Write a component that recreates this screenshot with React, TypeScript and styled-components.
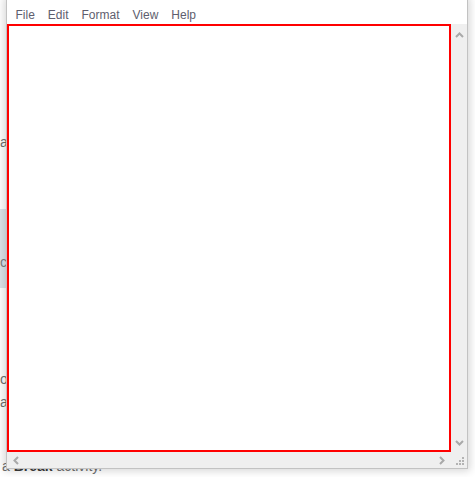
import React from "react";
import styled, { createGlobalStyle } from "styled-components";

const Global = createGlobalStyle`
  html, body { margin: 0; padding: 0; background: #ffffff; overflow: hidden; }
  #root { width: 475px; height: 477px; }
`;

const Page = styled.div`
  position: relative;
  width: 475px;
  height: 477px;
  overflow: hidden;
  background: #ffffff;
  font-family: "Liberation Sans", Arial, sans-serif;
  font-size: 14px;
  color: #6f6f6f;
`;

const Article = styled.div`
  display: flex;
  flex-direction: column;
  align-items: flex-start;
  padding-left: 0;
`;

const Line = styled.div<{ $top: number; $indent?: number }>`
  margin-top: ${(p) => p.$top}px;
  padding-left: ${(p) => p.$indent ?? 0}px;
  line-height: 23px;
  height: 23px;
  white-space: nowrap;
`;

const Note = styled.div`
  margin-top: 55px;
  width: 440px;
  height: 79px;
  box-sizing: border-box;
  padding-top: 42px;
  background: #dde3ea;
  color: #7d7d7d;
  line-height: 23px;
  white-space: nowrap;
  overflow: hidden;
`;

const Bold = styled.b`
  color: #3a3a3a;
  font-weight: 700;
`;

const Window = styled.div`
  position: absolute;
  left: 6px;
  top: -1px;
  width: 462px;
  height: 470px;
  box-sizing: border-box;
  border: 1px solid #c2c2c2;
  background: #ffffff;
  box-shadow: 0 0 8px 2px rgba(0, 0, 0, 0.16);
  display: grid;
  grid-template-rows: 24px 1fr;
`;

const MenuBar = styled.div`
  display: flex;
  align-items: flex-start;
  padding: 8px 0 0 2px;
  box-sizing: border-box;
  background: #ffffff;
`;

const MenuItem = styled.span`
  padding: 0 6.5px;
  font-family: "Liberation Sans", Arial, sans-serif;
  font-size: 12px;
  line-height: 14px;
  color: #5e5e6e;
`;

const Body = styled.div`
  display: grid;
  grid-template-columns: 444px 16px;
  grid-template-rows: 428px 16px;
`;

const Editor = styled.div`
  box-sizing: border-box;
  border: 2px solid #ff0000;
  background: #ffffff;
`;

const VScroll = styled.div`
  background: #efefef;
  display: flex;
  flex-direction: column;
  justify-content: space-between;
  align-items: center;
  padding: 8px 0 6px;
  box-sizing: border-box;
`;

const HScroll = styled.div`
  background: #efefef;
  display: flex;
  justify-content: space-between;
  align-items: center;
  padding: 0 6px;
  box-sizing: border-box;
`;

const Corner = styled.div`
  background: #efefef;
  display: flex;
  align-items: flex-end;
  justify-content: flex-end;
  padding: 0 2px 2px 0;
  box-sizing: border-box;
`;

const Chevron = ({ dir }: { dir: "up" | "down" | "left" | "right" }) => {
  const vertical = dir === "up" || dir === "down";
  const w = vertical ? 9 : 6;
  const h = vertical ? 6 : 9;
  const pts =
    dir === "up"
      ? "1,5 4.5,1.5 8,5"
      : dir === "down"
      ? "1,1 4.5,4.5 8,1"
      : dir === "left"
      ? "5,1 1.5,4.5 5,8"
      : "1,1 4.5,4.5 1,8";
  return (
    <svg width={w} height={h} viewBox={`0 0 ${w} ${h}`}>
      <polyline points={pts} fill="none" stroke="#a9a9a9" strokeWidth="2" />
    </svg>
  );
};

const Grip = () => (
  <svg width="10" height="10" viewBox="0 0 10 10">
    {[
      [7, 1],
      [4, 4],
      [7, 4],
      [1, 7],
      [4, 7],
      [7, 7],
    ].map(([x, y], i) => (
      <rect key={i} x={x} y={y} width="2" height="2" fill="#b3b3b3" />
    ))}
  </svg>
);

export default function App() {
  return (
    <Page>
      <Global />
      <Article>
        <Line $top={131}>are the steps you follow to set up the activity.</Line>
        <Note>ct the Delay activity to pause the workflow.</Note>
        <Line $top={80}>o continue, open the activity panel and choose</Line>
        <Line $top={0}>at the variable holds the value you need, then add</Line>
        <Line $top={41} $indent={2}>
          a <Bold>Break</Bold> activity.
        </Line>
      </Article>
      <Window>
        <MenuBar>
          <MenuItem>File</MenuItem>
          <MenuItem>Edit</MenuItem>
          <MenuItem>Format</MenuItem>
          <MenuItem>View</MenuItem>
          <MenuItem>Help</MenuItem>
        </MenuBar>
        <Body>
          <Editor />
          <VScroll>
            <Chevron dir="up" />
            <Chevron dir="down" />
          </VScroll>
          <HScroll>
            <Chevron dir="left" />
            <Chevron dir="right" />
          </HScroll>
          <Corner>
            <Grip />
          </Corner>
        </Body>
      </Window>
    </Page>
  );
}
